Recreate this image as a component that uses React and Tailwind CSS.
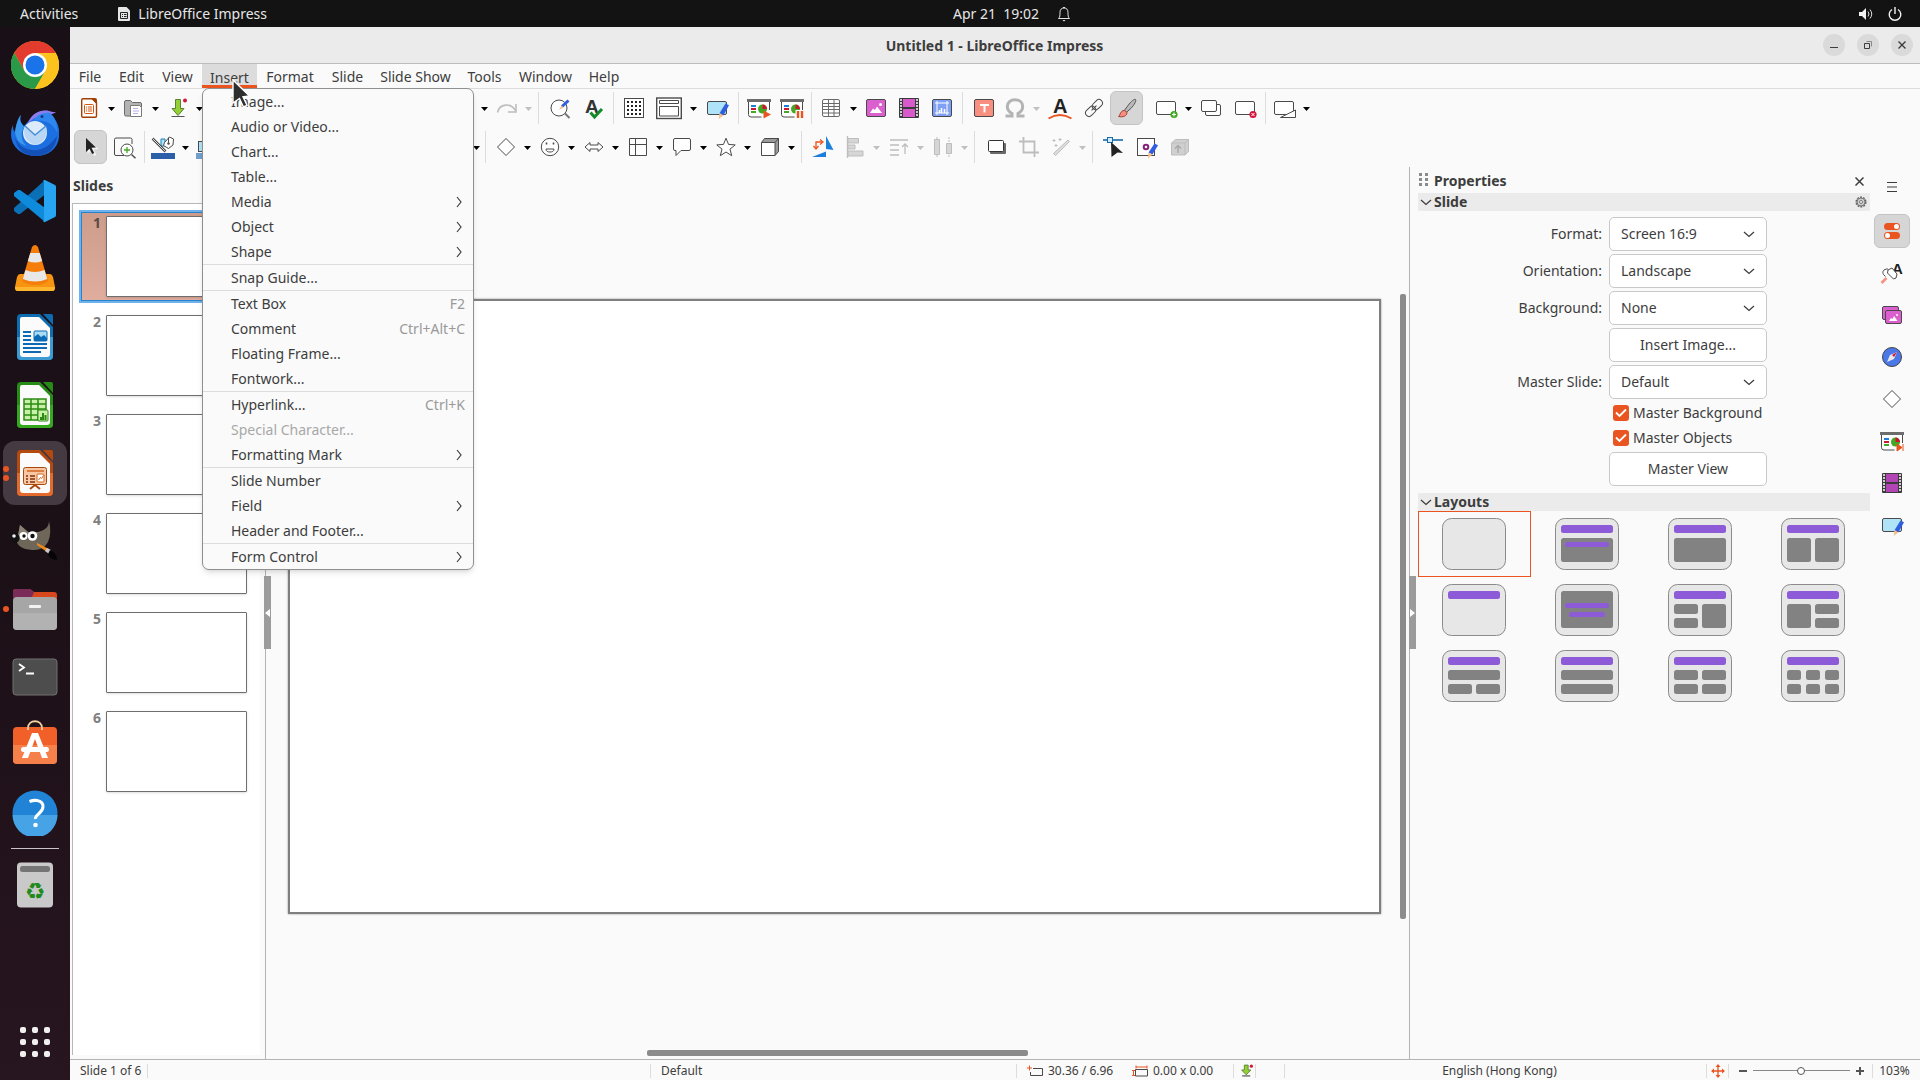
import React from 'react';

const G = '#4a4a4a';
const D = '#bdbdbd';

function S({ children, vb = '0 0 24 24', w = 24, h = 24 }) {
  return (
    <svg width={w} height={h} viewBox={vb} fill="none" className="block shrink-0" aria-hidden="true">
      {children}
    </svg>
  );
}

/* ---------- toolbar icons, all on a 24 unit grid ---------- */

const Board = ({ end }) => (
  <S>
    <path d="M2 5h20v16H4.500Q2 21 2 18.500z" fill="#fff" />
    <path d="M1.500 5v13.500q0 2.500 2.500 2.500h10.500M22.500 5v9" stroke={G} />
    <rect x="0" y="3" width="24" height="3" fill="#6d6d6d" />
    <path d="M4 9h5v2H4z" fill="#1b7fdc" />
    <path d="M4 12h5v2H4z" fill="#c9182f" />
    <path d="M4 15h5v2H4z" fill="#43a823" />
    <circle cx="15.500" cy="13" r="4.500" fill="#43a823" />
    <path d="M15.500 13V8.500A4.500 4.500 0 0 1 20 13z" fill="#c9182f" />
    {end}
  </S>
);

const DrawPen = () => (
  <S>
    <rect x="2.500" y="5.500" width="19" height="13" rx="1.500" fill="#aee3f8" stroke={G} />
    <path d="M20.500 7.500l3.500 1.800-5.500 10-4-2z" fill="#2f5fe0" />
    <path d="M14.500 17.300l4 2-4.800 3.700z" fill="#f7c08a" />
  </S>
);

const Diamond = () => (
  <S>
    <path d="M12 3.500l8.500 8.500-8.500 8.500L3.500 12z" stroke={G} fill="#fff" />
  </S>
);

const Film = ({ c = '#d95acb' }) => (
  <S>
    <rect x="2" y="2" width="20" height="20" rx="1" fill="#3b3b3b" />
    <path d="M6 3h12v8H6zM6 13h12v8H6z" fill={c} />
    <path d="M3 4h2M3 7h2M3 10h2M3 13h2M3 16h2M3 19h2M19 4h2M19 7h2M19 10h2M19 13h2M19 16h2M19 19h2" stroke="#fff" strokeWidth="1.500" />
  </S>
);

const icons = {
  newDoc: (
    <S>
      <path d="M4.700 4q0-1.300 1.300-1.300h9.500l4 4V20q0 1.300-1.300 1.300H6q-1.300 0-1.300-1.300z" fill="#fff" stroke="#a33e03" strokeWidth="1.400" />
      <path d="M13.500 2H18q2 0 2 2v4.500z" fill="#a33e03" />
      <rect x="7.500" y="8.500" width="9" height="9" rx="1" stroke="#d3560f" />
      <path d="M9 11h1.200M9 13h1.200M9 15h1.200M11 11h4M11 13h4M11 15h4" stroke="#d3560f" />
    </S>
  ),
  open: (
    <S>
      <path d="M3.500 6q0-1.500 1.500-1.500h4.500l2 2H19q1.500 0 1.500 1.500v10.500q0 1.500-1.500 1.500H5q-1.500 0-1.500-1.500z" fill="#b3b3b3" stroke="#6b6b6b" />
      <path d="M9.500 9.500h9l2 2v9h-11z" fill="#fff" stroke="#7a7a7a" />
      <path d="M12 12.500h5M12 15h6M12 17.500h5" stroke="#b7aef0" />
    </S>
  ),
  save: (
    <S>
      <path d="M9.500 3.500h5v9h3.500L12 19.500 6 12.500h3.500z" fill="#93d036" stroke="#5f7f35" />
      <path d="M5.500 20.500h13" stroke="#555" />
      <circle cx="19" cy="4.500" r="2" fill="#d3163c" />
    </S>
  ),
  redo: (
    <S>
      <path d="M2.500 16.500c2-9 13-10 18-2" stroke={D} strokeWidth="1.600" />
      <path d="M21 8v8h-8" stroke={D} strokeWidth="1.600" />
    </S>
  ),
  find: (
    <S>
      <circle cx="11" cy="12" r="8" fill="#fff" stroke={G} />
      <path d="M17 17.500l4.500 4.500" stroke="#777" strokeWidth="2" />
      <path d="M20.500 4.500L14 10.500" stroke="#2f5fe0" strokeWidth="3" />
      <path d="M13.500 9.500l2 2-4.500 2.500z" fill="#f7c08a" />
    </S>
  ),
  spell: (
    <S>
      <text x="4" y="17" fontSize="19" fontWeight="700" fill="#333" fontFamily="Liberation Sans, sans-serif">A</text>
      <path d="M9.500 16.500l4 4.500 7.500-8" stroke="#148a2a" strokeWidth="3" />
    </S>
  ),
  grid: (
    <S>
      <rect x="2.500" y="2.500" width="19" height="19" fill="#fff" stroke={G} />
      <path d="M5 6h14M5 10h14M5 14h14M5 18h14" stroke="#222" strokeWidth="2" strokeDasharray="2 2" />
    </S>
  ),
  views: (
    <S w={26} vb="0 0 26 24">
      <rect x="0.700" y="2" width="24.600" height="20.500" fill="#fff" stroke={G} strokeWidth="1.400" />
      <path d="M3.500 4.500h19v3h-19zM3.500 10.500h19v9.500h-19z" stroke={G} />
    </S>
  ),
  draw: <DrawPen />,
  start: <Board end={<path d="M16.500 14.500v8l7.500-4z" fill="#e95420" />} />,
  startPause: <Board end={<><path d="M15.500 14H24v8h-8.500z" fill="#fafafa" /><path d="M18 15v7M22 15v7" stroke="#e95420" strokeWidth="2.400" /></>} />,
  table: (
    <S>
      <rect x="3.500" y="3.500" width="17" height="17" rx="1.500" fill="#fff" stroke="#6a6a6a" />
      <path d="M3.500 7.500h17M3.500 10.500h17M3.500 13.500h17M3.500 17h17M9.500 3.500v17M15 3.500v17" stroke="#6a6a6a" />
    </S>
  ),
  image: (
    <S>
      <rect x="2.500" y="3.500" width="19" height="17" rx="1.500" fill="#db5fcf" stroke={G} />
      <path d="M6 17l3-4.500 2 1.500 2-3.500 5 6.500z" fill="#fff" />
      <circle cx="16.500" cy="8.500" r="1.500" fill="#fff" />
    </S>
  ),
  movie: <Film />,
  chart: (
    <S>
      <rect x="2.500" y="3.500" width="19" height="17" rx="1.500" fill="#7fa0f5" stroke={G} />
      <path d="M7 5v14M5 17h14M17 5v14M5 7h14" stroke="#fff" />
      <path d="M9.500 17v-3M11.500 17v-5M14.500 17v-4" stroke="#fff" strokeWidth="1.500" />
    </S>
  ),
  textbox: (
    <S>
      <rect x="2.500" y="3.500" width="19" height="17" rx="1.500" fill="#f98f80" stroke={G} />
      <path d="M8 9h9M12.500 9v7.500" stroke="#fff" strokeWidth="2" />
    </S>
  ),
  omega: (
    <S>
      <path d="M2.500 20h6.500v-2.500C6 16 4.300 13.500 4.300 10.500 4.300 6.500 7.500 3.800 12 3.800s7.700 2.700 7.700 6.700c0 3-1.700 5.500-4.700 7V20h6.500" stroke="#b3b3b3" strokeWidth="3" />
    </S>
  ),
  fontwork: (
    <S>
      <text x="5" y="16.500" fontSize="20" fontWeight="700" fill="#222" fontFamily="Liberation Sans, sans-serif">A</text>
      <path d="M0.500 22.500Q12 15.500 23.500 22.500" stroke="#e95420" strokeWidth="2" />
    </S>
  ),
  link: (
    <S>
      <g transform="rotate(-45 12 12)" stroke={G}>
        <rect x="1.500" y="8.500" width="11.500" height="7" rx="3.500" />
        <rect x="11" y="8.500" width="11.500" height="7" rx="3.500" />
        <path d="M8.500 12h7" />
      </g>
    </S>
  ),
  brush: (
    <S>
      <path d="M20.500 3.500c1.200 1-1 5-4.500 8.800l-4.500 4-2-2 3.500-4.800c3-4 6.500-7 7.500-6z" fill="#b9b9b9" stroke="#555" />
      <path d="M9.500 14.300l2.500 2.500c0 3-4 4.700-8.500 3.700 2-1.200 1.500-5.700 6-6.200z" fill="#f98f80" stroke="#a33e2c" />
    </S>
  ),
  newSlide: (
    <S>
      <rect x="2.500" y="5.500" width="19" height="13" rx="1.500" fill="#fff" stroke={G} />
      <circle cx="20" cy="18.500" r="3.600" fill="#43a823" />
      <path d="M18 18.500h4M20 16.500v4" stroke="#fff" />
    </S>
  ),
  dupSlide: (
    <S>
      <rect x="6.500" y="8.500" width="15" height="11" rx="1.500" fill="#fff" stroke={G} />
      <rect x="2.500" y="4.500" width="15" height="11" rx="1.500" fill="#fff" stroke={G} />
    </S>
  ),
  delSlide: (
    <S>
      <rect x="2.500" y="5.500" width="19" height="13" rx="1.500" fill="#fff" stroke={G} />
      <circle cx="20" cy="18.500" r="3.600" fill="#d3163c" />
      <path d="M18.500 17l3 3M21.500 17l-3 3" stroke="#fff" />
    </S>
  ),
  layout: (
    <S>
      <rect x="1.500" y="5.500" width="19" height="13" rx="1.500" fill="#fff" stroke={G} />
      <path d="M7.500 21.500L22.500 14v7.500z" fill="#fff" stroke={G} />
    </S>
  ),
  select: (
    <S>
      <path d="M7 3l11 10-4.800.5 2.800 5.500-2.500 1-2.500-5.500L7 18z" fill="#fff" opacity=".7" transform="translate(1.500 1)" />
      <path d="M7 3l10 9.500-4.500.3 2.700 5.300-2 1-2.700-5.400L7 17z" fill="#222" />
    </S>
  ),
  zoom: (
    <S>
      <path d="M12 20.500H4q-1.500 0-1.500-1.500V4.500Q2.500 3 4 3h14.500Q20 3 20 4.500V9" stroke={G} />
      <circle cx="15" cy="15" r="6" fill="#fff" stroke={G} />
      <path d="M15 12v6M12 15h6" stroke="#43a823" strokeWidth="1.300" />
      <path d="M19.500 19.500l4 3.800" stroke={G} strokeWidth="1.400" />
    </S>
  ),
  fill: (
    <S>
      <path d="M10 4h4v7h-4z" fill="#aee3f8" stroke="#1b7fb5" />
      <path d="M13.500 7.500l5-5.500 4 2-.5 6-4.500 3.500-5-3z" fill="#fff" stroke={G} />
      <path d="M17.500 2.500v5" stroke={G} />
      <circle cx="17.500" cy="8.500" r="1.200" fill={G} />
      <path d="M1.500 3.500l13 13" stroke={G} strokeWidth="2.500" />
      <path d="M1.500 3.500l13 13" stroke="#ddd" />
      <rect x="0" y="18" width="24" height="6" fill="#2b5fa8" />
    </S>
  ),
  line: (
    <S>
      <rect x="2.500" y="6.500" width="14" height="10" fill="#aee3f8" stroke={G} />
      <rect x="0" y="18" width="24" height="6" fill="#729fcf" />
    </S>
  ),
  diamond: <Diamond />,
  smiley: (
    <S>
      <circle cx="12" cy="12" r="8.700" fill="#fff" stroke={G} />
      <path d="M8.500 7.500v2M15.500 7.500v2" stroke={G} strokeWidth="1.600" />
      <path d="M8 14h8c0 2.500-2 3-4 3s-4-.5-4-3z" stroke={G} />
    </S>
  ),
  arrows: (
    <S>
      <path d="M3 12l5-4.500V10h8V7.500l5 4.500-5 4.500V14H8v2.500z" fill="#fff" stroke={G} />
    </S>
  ),
  flow: (
    <S>
      <path d="M3.500 3.500h17v17h-17z" fill="#fff" stroke={G} />
      <path d="M9.500 3.500v17M3.500 9.500h17" stroke={G} />
    </S>
  ),
  callout: (
    <S>
      <path d="M5 3.500h14q1.500 0 1.500 1.500v9q0 1.500-1.500 1.500h-8L6 20.500v-5H5q-1.500 0-1.500-1.500V5q0-1.500 1.500-1.500z" fill="#fff" stroke={G} />
    </S>
  ),
  star: (
    <S>
      <path d="M12 3.200l2.500 6.200 6.700.5-5.200 4.200 1.700 6.600L12 17l-5.700 3.700L8 14.100 2.800 9.900l6.700-.5z" fill="#fff" stroke={G} />
    </S>
  ),
  cube: (
    <S>
      <path d="M3.500 7.500l3-4h14v13l-3.500 4z" fill="#9a9a9a" stroke={G} />
      <path d="M3.500 7.500h13.500v13H3.500z" fill="#fff" stroke={G} />
      <path d="M17 7.500l3.500-4" stroke={G} />
    </S>
  ),
  rotate: (
    <S>
      <path d="M15 1v13l7.500 1z" fill="#1b7fdc" />
      <path d="M1 22l14-5.500V22z" fill="#1b7fdc" />
      <path d="M5 13V7h6" stroke="#e95420" strokeWidth="1.300" />
      <path d="M9 4.500L12 7 9 9.500M2.500 11L5 14l2.500-3" stroke="#e95420" strokeWidth="1.300" />
    </S>
  ),
  align: (
    <S>
      <path d="M4.500 1v22" stroke={D} strokeWidth="1.300" />
      <path d="M5 3.500h10.500v4.500H5zM5 10h7v4H5zM5 16h15v5H5z" fill="#d6d6d6" stroke={D} />
    </S>
  ),
  arrange: (
    <S>
      <path d="M3 5h18M3 10h9M3 15h9M3 20h9" stroke={D} strokeWidth="1.500" />
      <path d="M18 19v-9M15 12l3-3 3 3" stroke={D} strokeWidth="1.300" />
    </S>
  ),
  distribute: (
    <S>
      <path d="M6 2v20M18 2v20" stroke={D} strokeDasharray="2 1" />
      <path d="M3.500 4.500h5v15h-5zM15.500 8.500h5v10h-5z" fill="#d6d6d6" stroke={D} />
    </S>
  ),
  shadow: (
    <S>
      <rect x="6" y="8" width="16" height="11" rx="1" fill="#6a6a6a" />
      <rect x="4.500" y="5.500" width="15" height="11" rx="1" fill="#fff" stroke="#333" />
    </S>
  ),
  crop: (
    <S>
      <path d="M6.500 2v15.500H22M2 6.500h15.500V22" stroke={D} strokeWidth="1.800" />
    </S>
  ),
  wand: (
    <S>
      <path d="M4.500 18.500L19 5l1.500 1.500L6.500 20.500z" fill="#ddd" stroke={D} />
      <path d="M5 4v3M3.500 5.500h3M11 3v3M9.500 4.500h3M7 9v3M5.500 10.500h3" stroke={D} />
    </S>
  ),
  points: (
    <S>
      <path d="M2 5h20" stroke="#1b6aa8" strokeWidth="1.600" />
      <rect x="6.500" y="2.500" width="5" height="5" fill="#cdeefc" stroke="#1b6aa8" />
      <path d="M10 7l12 11-5.500-.5L10.500 22z" fill="#222" />
    </S>
  ),
  glue: (
    <S>
      <rect x="3.500" y="3.500" width="17" height="17" fill="#fff" stroke={G} />
      <circle cx="12" cy="12" r="2.300" stroke="#87237b" strokeWidth="2" />
      <path d="M20.500 8.500l3.500 1.800-5.500 9.200-4-2z" fill="#2f5fe0" />
      <path d="M14.500 17.500l4 2-4.500 4z" fill="#f7c08a" />
    </S>
  ),
  extrude: (
    <S>
      <path d="M3.500 8l4-3.500h13v12L17 20H3.500z" fill="#d0d0d0" stroke={D} />
      <path d="M3.500 8H17v12M17 8l3.500-3.500" stroke={D} />
      <path d="M10 18v-7M7 13.500l3-3 3 3" stroke="#a9a9a9" strokeWidth="1.500" />
    </S>
  ),
};

/* ---------- toolbars ---------- */

function Toolbar({ items, label }) {
  return (
    <div role="toolbar" aria-label={label} className="flex h-[34px] items-center">
      {items.map((it, i) => {
        const [kind, width, state] = it;
        if (kind === '|') return <span key={i} className={`flex h-8 shrink-0 justify-center ${width || 'w-[7px]'}`}><span className="w-px bg-[#dcdcdc]" /></span>;
        if (kind === ' ') return <span key={i} className={`shrink-0 ${width}`} />;
        if (kind === 'v')
          return (
            <button key={i} aria-label="More options" className={`flex h-[34px] shrink-0 items-center justify-center ${width || 'w-[11px]'}`}>
              <svg width="7" height="4" viewBox="0 0 7 4" className="mt-0.5"><path d="M0 0h7L3.500 4z" fill={state === 'off' ? '#c0c0c0' : '#000'} /></svg>
            </button>
          );
        return (
          <button
            key={i}
            aria-label={kind}
            className={`flex h-[34px] shrink-0 items-center justify-center ${width || 'w-[33px]'} ${state === 'on' ? 'rounded-md border border-[#c4c4c4] bg-[#d6d6d6]' : ''}`}
          >
            {icons[kind]}
          </button>
        );
      })}
    </div>
  );
}

const row1 = [
  ['newDoc', 'w-8'], ['v', 'w-3'], ['open', 'w-8'], ['v', 'w-3'], ['save'], ['v'], [' ', 'w-[274px]'],
  ['v'], ['redo'], ['v', '', 'off'], ['|', 'w-[9px]'], ['find'], ['spell', 'w-[34px]'], ['|'],
  ['grid'], ['views', 'w-[37px]'], ['v', 'w-3'], ['draw', 'w-9'], ['|'], ['start'], ['startPause'], ['|', 'w-1.5'],
  ['table'], ['v', 'w-3'], ['image'], ['movie'], ['chart'], ['|', 'w-[9px]'],
  ['textbox'], ['omega', 'w-[30px]'], ['v', 'w-3', 'off'], ['fontwork', 'w-[35px]'], ['link'], ['brush', '', 'on'], [' ', 'w-1.5'],
  ['newSlide'], ['v', 'w-3'], ['dupSlide', 'w-[34px]'], ['delSlide', 'w-[34px]'], ['|', 'w-1.5'], ['layout'], ['v'],
];

const row2 = [
  [' ', 'w-px'], ['select', '', 'on'], ['zoom', 'w-[34px]'], ['|', 'w-1.5'], ['fill', 'w-8'], ['v', 'w-3'], ['line'], [' ', 'w-[247px]'],
  ['v'], ['|', 'w-[7px]'], ['diamond'], ['v'], ['smiley'], ['v'], ['arrows'], ['v'], ['flow'], ['v'],
  ['callout'], ['v'], ['star'], ['v'], ['cube'], ['v'], ['|', 'w-[9px]'],
  ['rotate'], ['align', 'w-8'], ['v', '', 'off'], ['arrange'], ['v', '', 'off'], ['distribute'], ['v', '', 'off'], ['|', 'w-[9px]'],
  ['shadow'], ['crop'], ['wand', 'w-8'], ['v', '', 'off'], ['|', 'w-2'], ['points'], ['glue', 'w-[34px]'], ['extrude'],
];

/* ---------- menus ---------- */

const insertMenu = [
  ['Image...'], ['Audio or Video...'], ['Chart...'], ['Table...'],
  ['Media', '>'], ['Object', '>'], ['Shape', '>'], null,
  ['Snap Guide...'], null,
  ['Text Box', 'F2'], ['Comment', 'Ctrl+Alt+C'], ['Floating Frame...'], ['Fontwork...'], null,
  ['Hyperlink...', 'Ctrl+K'], ['Special Character...', 'off'], ['Formatting Mark', '>'], null,
  ['Slide Number'], ['Field', '>'], ['Header and Footer...'], null,
  ['Form Control', '>'],
];

function InsertMenu() {
  return (
    <div role="menu" aria-label="Insert" className="absolute top-full left-0 z-20 w-[272px] rounded-[7px] border border-[#8f8f8f] bg-[#fafafa] shadow-md">
      {insertMenu.map((m, i) =>
        m === null ? (
          <div key={i} role="separator" className="h-px bg-[#dcdcdc]" />
        ) : (
          <button key={i} role="menuitem" disabled={m[1] === 'off'} className="flex h-[25px] w-full items-center justify-between pr-2 pl-7 text-left text-[#3d3d3d] disabled:text-[#a8a8a8]">
            <span>{m[0]}</span>
            {m[1] === '>' ? (
              <svg width="8" height="12" viewBox="0 0 8 12" fill="none" className="mr-0.5"><path d="M2 1l4 5-4 5" stroke="#3d3d3d" strokeWidth="1.200" /></svg>
            ) : m[1] && m[1] !== 'off' ? (
              <span className="text-[#999]">{m[1]}</span>
            ) : null}
          </button>
        ),
      )}
      <svg width="20" height="32" viewBox="0 0 20 32" className="absolute -top-2.5 left-[29px]">
        <path d="M1 1l16.500 16-6.500.8 4 8.500-3.500 1.700-4-8.500L1 24z" fill="#2e2e2e" stroke="#fff" strokeWidth="1.400" />
      </svg>
    </div>
  );
}

const menus = [
  ['File', 'w-10'], ['Edit', 'w-[43px]'], ['View', 'w-[49px]'], ['Insert', 'w-[55px]'], ['Format', 'w-[66px]'],
  ['Slide', 'w-[49px]'], ['Slide Show', 'w-[87px]'], ['Tools', 'w-[51px]'], ['Window', 'w-[71px]'], ['Help', 'w-[46px]'],
];

/* ---------- dock ---------- */

function DocIcon({ a, b, children }) {
  return (
    <S w={38} h={46} vb="0 0 38 46">
      <path d="M5 0h19l13 13v29q0 4-4 4H5q-4 0-4-4V4q0-4 4-4z" fill={a} />
      <path d="M1 23h36v19q0 4-4 4H5q-4 0-4-4z" fill={b} />
      <path d="M6 3h17l11 11v26q0 3-3 3H7q-3 0-3-3V5q0-2 2-2z" fill="#fbfbfb" />
      <path d="M27 0h8q2 0 2 2v9z" fill={a} />
      {children}
    </S>
  );
}

const dock = [
  ['Google Chrome', (
    <S w={48} h={48} vb="0 0 48 48">
      <circle cx="24" cy="24" r="24" fill="#fcc31e" />
      <path d="M3.200 12A24 24 0 0 1 44.800 12H24L13.600 30z" fill="#e33b2e" />
      <path d="M3.200 12A24 24 0 0 0 24 48L34.400 30 24 24 13.600 30z" fill="#2a9a49" />
      <path d="M24 48A24 24 0 0 0 44.800 12H24l10.400 18z" fill="#fcc31e" />
      <circle cx="24" cy="24" r="12" fill="#fff" />
      <circle cx="24" cy="24" r="9.500" fill="#1a73e8" />
    </S>
  )],
  ['Thunderbird', (
    <S w={48} h={48} vb="0 0 48 48">
      <path d="M10 6c-2 5 0 8 3 11l7-8c4-6 12-8 18-7-2 1 0 3 2 4 7 6 9 14 8 22-1 12-11 19-23 19C11 47 0 38 0 25c0-4 1-7 2-9 0 3 0 5 2 7C5 16 7 9 10 6z" fill="#1c6fe0" />
      <path d="M10 6c-2 5 0 8 3 12-4 6-3 15 3 19-8-2-11-7-12-14C5 16 7 9 10 6z" fill="#3b9af0" />
      <path d="M17 15C19 6 28 0 38 2c3 1 4 1 7 1-3 2-5 3-10 3-8 0-14 4-18 9z" fill="#8e7bf0" />
      <path d="M22 12c4-6 10-9 17-8 5 4 8 11 7 20-3-8-10-14-24-12z" fill="#2f86ee" />
      <path d="M4 28c3 9 12 14 22 13 8-1 14-6 20-14-1 12-9 20-22 20C13 47 5 39 4 28z" fill="#1351b8" />
      <circle cx="24" cy="24" r="12" fill="#dcebfb" />
      <path d="M14 17l10 9 11-9c3 9-2 16-10 19-9-2-14-10-11-19z" fill="#b9d6f5" />
      <path d="M14 17l10 9 11-9" stroke="#4a90d9" strokeWidth="1.500" />
      <circle cx="31" cy="7.500" r="1.500" fill="#123a80" />
    </S>
  )],
  ['Visual Studio Code', (
    <S w={44} h={44} vb="0 0 44 44">
      <path d="M32 1L1 29v3l4 3h2L34 14z" fill="#0a6fb5" />
      <path d="M7 11H5l-4 3v3l31 26 3-12z" fill="#0e8bdb" />
      <path d="M32 1l10 5q1 .5 1 2v28q0 1.500-1 2l-10 5q-1 .5-2-1 1 0 1-2V4q0-2-1-2 1-1.500 2-1z" fill="#27a5f3" />
    </S>
  )],
  ['VLC', (
    <S w={42} h={48} vb="0 0 42 48">
      <path d="M6 29h30q2 0 3 3l2 10q0 3-2 3H3q-2 0-2-3l2-10q1-3 3-3z" fill="#f79412" />
      <path d="M1 42h40q0 4-2 4H3q-2 0-2-4z" fill="#ffb52e" />
      <path d="M18 2q3-4 6 0l10 34q-5 4-13 4T8 36z" fill="#f47d0b" />
      <path d="M16.300 8h9.400l2.500 8q-7 3-14.400 0zM11.500 25q9 4 19 0l2.700 9q-12 5-24.400 0z" fill="#e8e8e8" />
    </S>
  )],
  ['LibreOffice Writer', (
    <DocIcon a="#0e6cb0" b="#3d9bd4">
      <path d="M7 18h8M7 22h8M7 26h8M7 30h24M7 34h24M7 38h18" stroke="#0b6cb5" strokeWidth="2" />
      <rect x="18" y="17" width="13" height="10" rx="1" fill="#a9dcf5" stroke="#0b6cb5" />
      <path d="M18 27v-4l4-3 3 3 3-2 3 3v3z" fill="#0b6cb5" />
    </DocIcon>
  )],
  ['LibreOffice Calc', (
    <DocIcon a="#268c16" b="#35a820">
      <path d="M8 17h22v21H8z" fill="#c9f0a8" stroke="#2c8a12" strokeWidth="1.500" />
      <path d="M8 22h22M8 27h22M8 33h22M15 17v21M22 17v21" stroke="#2c8a12" strokeWidth="1.500" />
      <rect x="22" y="28" width="10" height="11" rx="1" fill="#c9f0a8" stroke="#2c8a12" />
      <path d="M25 38v-3M27 38v-7M29.500 38v-5" stroke="#2c8a12" strokeWidth="2" />
    </DocIcon>
  )],
  ['LibreOffice Impress', (
    <DocIcon a="#b54a10" b="#e36a2c">
      <path d="M14 39l5-4 5 4" stroke="#a8480f" strokeWidth="2" />
      <rect x="7.500" y="17.500" width="23" height="17" rx="2" fill="#f8c8a4" stroke="#a8480f" />
      <path d="M11 21h17" stroke="#d3661f" strokeWidth="1.500" />
      <path d="M10 26h2M10 29h2M10 32h2M14 26h5M14 29h5M14 32h5" stroke="#7d3207" strokeWidth="1.500" />
      <rect x="21" y="24" width="7" height="8" rx="1" fill="#fff" stroke="#d3661f" />
      <path d="M22.500 30l2-2.500 1 1 2-3" stroke="#d3661f" />
    </DocIcon>
  ), 2],
  ['GIMP', (
    <S w={48} h={40} vb="0 0 48 40">
      <path d="M9 4l8 7q10 2 17-3 4-3 4-8 3 12-1 21-5 9-16 8Q6 28 5 18 8 12 9 4z" fill="#6d6659" />
      <path d="M9 4l8 7q8 2 14-1-12 8-24 5z" fill="#8a8272" />
      <circle cx="12.500" cy="15" r="4" fill="#fff" /><circle cx="13" cy="15" r="1.700" fill="#111" />
      <circle cx="21.500" cy="15" r="4.800" fill="#fff" /><circle cx="21.500" cy="15" r="2.200" fill="#111" />
      <ellipse cx="4" cy="17" rx="4.500" ry="5" fill="#111" /><circle cx="3" cy="15" r="1.800" fill="#eee" />
      <path d="M26 22l12 6-2 3-10-7z" fill="#f08a1d" />
      <path d="M36 27l4 2-2 4-4-3z" fill="#c9c9c9" />
      <path d="M39 29q7 3 7 10-8-1-9-6z" fill="#050505" />
    </S>
  )],
  ['Files', (
    <S w={46} h={42} vb="0 0 46 42">
      <path d="M1 4q0-3 3-3h14l4 3h20q3 0 3 3v12H1z" fill="#d9481c" />
      <path d="M1 4q0-3 3-3h14l4 3-6 15H1z" fill="#7b2b58" />
      <rect x="1" y="9" width="44" height="33" rx="4" fill="#a6a6a6" />
      <path d="M1 25h44v13q0 4-4 4H5q-4 0-4-4z" fill="#b2b2b2" />
      <rect x="17" y="17" width="12" height="3" rx="1" fill="#f2f2f2" />
    </S>
  ), 1],
  ['Terminal', (
    <S w={46} h={38} vb="0 0 46 38">
      <rect x="1" y="1" width="44" height="36" rx="3" fill="#4d4d4d" stroke="#707070" />
      <path d="M7 6l5 3.500L7 13M14 15.500h8" stroke="#fff" strokeWidth="1.800" />
    </S>
  )],
  ['Ubuntu Software', (
    <S w={46} h={50} vb="0 0 46 50">
      <rect x="1" y="7" width="44" height="37" rx="4" fill="#f2602a" />
      <path d="M1 25h44v15q0 4-4 4H5q-4 0-4-4z" fill="#f58049" />
      <path d="M16 10V8c0-9 14-9 14 0v2" stroke="#f5cf9e" strokeWidth="1.800" />
      <path d="M20 13h6l10 25h-6l-7-19-7 19h-6z" fill="#fff" />
      <rect x="9" y="27" width="28" height="5" rx="2.500" fill="#fff" />
    </S>
  )],
  ['Help', (
    <S w={46} h={46} vb="0 0 46 46">
      <circle cx="23" cy="23" r="22.500" fill="#2183d6" />
      <path d="M.5 25a22.500 22.500 0 0 0 45 0z" fill="#45a3e6" />
      <path d="M17.500 11.500q4-1.500 7.500-1 6 1 6 6 0 3.500-4 7t-3.500 5.500" stroke="#fff" strokeWidth="3" />
      <circle cx="23.500" cy="35" r="2.300" fill="#fff" />
    </S>
  )],
];

/* ---------- layouts panel ---------- */

const P = '#8e5bd8';
const K = '#828282';
const title = [6, 7, 52, 8, P];
const layouts = [
  [],
  [title, [6, 20, 52, 24, K], [10, 24, 44, 5, P]],
  [title, [6, 20, 52, 24, K]],
  [title, [6, 20, 24, 24, K], [34, 20, 24, 24, K]],
  [title],
  [[6, 7, 52, 37, K], [10, 19, 44, 5, P], [14, 28, 36, 5, P]],
  [title, [6, 20, 24, 10, K], [6, 34, 24, 10, K], [34, 20, 24, 24, K]],
  [title, [6, 20, 24, 24, K], [34, 20, 24, 10, K], [34, 34, 24, 10, K]],
  [title, [6, 20, 52, 10, K], [6, 34, 24, 10, K], [34, 34, 24, 10, K]],
  [title, [6, 20, 52, 10, K], [6, 34, 52, 10, K]],
  [title, [6, 20, 24, 10, K], [34, 20, 24, 10, K], [6, 34, 24, 10, K], [34, 34, 24, 10, K]],
  [title, [6, 20, 14, 10, K], [25, 20, 14, 10, K], [44, 20, 14, 10, K], [6, 34, 14, 10, K], [25, 34, 14, 10, K], [44, 34, 14, 10, K]],
];

function Chevron({ className = '' }) {
  return (
    <svg width="12" height="7" viewBox="0 0 12 7" fill="none" className={className} aria-hidden="true">
      <path d="M1 1l5 4.500L11 1" stroke="#3d3d3d" strokeWidth="1.300" />
    </svg>
  );
}

function SectionBar({ children, gear }) {
  return (
    <div className="flex h-[18px] items-center bg-[#ebebeb] pr-[3px] pl-0.5">
      <button className="flex grow items-center gap-0.5 text-left font-bold"><Chevron />{children}</button>
      {gear && (
        <button aria-label="More options">
          <svg width="12" height="12" viewBox="0 0 12 12" fill="none" className="block"><circle cx="6" cy="6" r="4.800" stroke="#666" strokeWidth="1.500" strokeDasharray="2 1" /><circle cx="6" cy="6" r="4" fill="#ccc" stroke="#777" /><circle cx="6" cy="6" r="1.500" fill="#fff" stroke="#777" /></svg>
        </button>
      )}
    </div>
  );
}

function Field({ id, label, value }) {
  return (
    <div className="flex items-center">
      <label htmlFor={id} className="w-[184px] text-right">{label}</label>
      <div className="relative ml-[7px] w-[158px]">
        <select id={id} defaultValue={value} className="h-[34px] w-full appearance-none rounded-[5px] border border-[#c9c9c9] bg-white pl-[11px]">
          <option>{value}</option>
        </select>
        <Chevron className="pointer-events-none absolute top-3.5 right-3" />
      </div>
    </div>
  );
}

function Check({ label }) {
  return (
    <label className="ml-[195px] flex h-[25px] items-center gap-1 whitespace-nowrap">
      <span className="relative flex h-4 w-4">
        <input type="checkbox" defaultChecked className="h-4 w-4 appearance-none rounded-[3px] bg-[#e95420]" />
        <svg width="12" height="10" viewBox="0 0 12 10" fill="none" className="pointer-events-none absolute top-[3px] left-0.5"><path d="M1 4.500L4.500 8 11 1.500" stroke="#fff" strokeWidth="1.800" /></svg>
      </span>
      {label}
    </label>
  );
}

const tabs = [
  ['Properties', (
    <S>
      <rect x="4" y="4" width="16" height="7" rx="3.500" fill="#e95420" /><circle cx="16.500" cy="7.500" r="2.500" fill="#fff" />
      <rect x="4" y="13" width="16" height="7" rx="3.500" fill="#e95420" /><circle cx="7.500" cy="16.500" r="2.500" fill="#fff" />
    </S>
  )],
  ['Styles', (
    <S>
      <text x="12" y="13" fontSize="15" fontWeight="700" fill="#222" fontFamily="Liberation Sans, sans-serif">A</text>
      <path d="M8 9l4-2 5 6-1 4-2.500 1-6-6z" fill="#fff" stroke={G} />
      <path d="M8 8c-5 0-6 3-4.500 5.500l2 2" stroke={G} />
      <path d="M1.500 22l5-5" stroke="#f98f80" strokeWidth="2.500" />
    </S>
  )],
  ['Gallery', (
    <S>
      <rect x="2.500" y="3.500" width="16" height="13" rx="1.500" fill="#db5fcf" stroke={G} />
      <rect x="5.500" y="7.500" width="16" height="13" rx="1.500" fill="#db5fcf" stroke={G} />
      <path d="M9 18l2-3 1.500 1 1.500-3 3.500 5z" fill="#fff" /><circle cx="17" cy="12" r="1" fill="#fff" />
    </S>
  )],
  ['Navigator', (
    <S>
      <circle cx="12" cy="12" r="9.500" fill="#4a78e8" stroke="#444" />
      <path d="M17 7l-3 7-7 3 3-7z" fill="#e8e8e8" /><path d="M17 7l-3 5-2-2z" fill="#d3163c" />
    </S>
  )],
  ['Shapes', <Diamond />],
  ['Slide Transition', <Board end={<path d="M17 15v7l5-3.500zM23 15v7" fill="#e95420" stroke="#e95420" />} />],
  ['Animation', <Film c="#b344b3" />],
  ['Master Slides', <DrawPen />],
];

/* ---------- page ---------- */

function Bar({ className = '' }) {
  return <span className={`h-3.5 w-px shrink-0 bg-[#dcdcdc] ${className}`} />;
}

export default function App() {
  return (
    <div className="flex h-screen flex-col overflow-hidden bg-[#fafafa] font-['Noto_Sans',sans-serif] text-sm leading-5 text-[#3d3d3d]">
      <header className="grid h-[27px] shrink-0 grid-cols-3 items-center bg-[#131313] text-[#e6e6e6]">
        <div className="flex items-center pl-5">
          <button>Activities</button>
          <button className="ml-10 flex items-center gap-2">
            <svg width="12" height="14" viewBox="0 0 12 14"><path d="M1 0h7.500L12 3.500V13q0 1-1 1H1q-1 0-1-1V1q0-1 1-1z" fill="#e6e6e6" /><path d="M2.500 5.500h7v6h-7z" fill="none" stroke="#222" /><path d="M4 7.500h1M4 9.500h1M6 7.500h2.500M6 9.500h2.500" stroke="#222" /></svg>
            LibreOffice Impress
          </button>
        </div>
        <div className="flex items-center justify-center gap-[18px] pl-[104px]">
          <button className="whitespace-pre">Apr 21  19:02</button>
          <svg width="14" height="16" viewBox="0 0 14 16" fill="none"><path d="M1.500 12.500h11c-1.500-1.500-1.500-3-1.500-6C11 3.500 9.500 2 7 2S3 3.500 3 6.500c0 3 0 4.500-1.500 6z" stroke="#e6e6e6" /><path d="M5.500 14h3L7 15.500zM6 1h2v1H6z" fill="#e6e6e6" /></svg>
        </div>
        <div className="flex items-center justify-end gap-3.5 pr-[18px]">
          <svg width="15" height="14" viewBox="0 0 15 14" fill="none"><path d="M0 5h3l4-4v12L3 9H0z" fill="#f2f2f2" /><path d="M9 4.500q2 2.500 0 5M11 2.500q3.500 4.500 0 9" stroke="#ddd" /></svg>
          <svg width="14" height="14" viewBox="0 0 14 14" fill="none"><path d="M4 2.500a5.800 5.800 0 1 0 6 0M7 0v7" stroke="#f2f2f2" strokeWidth="1.400" /></svg>
        </div>
      </header>

      <div className="flex min-h-0 grow">
        <nav aria-label="Dock" className="flex w-[70px] shrink-0 flex-col items-center gap-1 bg-linear-to-b from-[#191017] via-[#1c1017] to-[#27151f] pt-1.5">
          {dock.map(([name, icon, dots], i) => (
            <button key={i} aria-label={name} className={`relative flex h-16 w-16 shrink-0 items-center justify-center rounded-xl ${dots === 2 ? 'bg-[#453a41]' : ''}`}>
              {dots && (
                <span className="absolute inset-y-0 left-0 flex flex-col justify-center gap-[3px]">
                  {Array.from({ length: dots }, (_, k) => <span key={k} className="h-1.5 w-1.5 rounded-full bg-[#e95420]" />)}
                </span>
              )}
              {icon}
            </button>
          ))}
          <span className="-mt-px h-px w-12 shrink-0 bg-[#c9c4c7]" />
          <button aria-label="Trash" className="flex h-16 w-16 shrink-0 items-center justify-center">
            <S w={38} h={46} vb="0 0 38 46">
              <rect x="1" y="0.500" width="36" height="45" rx="4" fill="#c9c9c9" />
              <rect x="4" y="4" width="30" height="6" rx="2.500" fill="#757575" />
              <text x="19" y="37" textAnchor="middle" fontSize="23" fill="#22891c" fontFamily="DejaVu Sans, sans-serif">♻</text>
            </S>
          </button>
          <button aria-label="Show Applications" className="mt-auto mb-[23px] grid grid-cols-3 gap-1.5">
            {Array.from({ length: 9 }, (_, k) => <span key={k} className="h-1.5 w-1.5 rounded-[2px] bg-[#f0f0f0]" />)}
          </button>
        </nav>

        <div className="flex min-w-0 grow flex-col">
          <div className="flex h-[37px] shrink-0 items-center border-b border-[#bdbdbd] bg-[#ebebeb] pr-[7px]">
            <h1 className="grow pt-0.5 pl-[96px] text-center font-bold">Untitled 1 - LibreOffice Impress</h1>
            <div className="flex gap-3">
              <button aria-label="Minimize" className="flex h-[22px] w-[22px] items-center justify-center rounded-full bg-[#dadada]"><span className="mt-1 h-px w-2 bg-[#3d3d3d]" /></button>
              <button aria-label="Restore" className="flex h-[22px] w-[22px] items-center justify-center rounded-full bg-[#dadada]">
                <svg width="8" height="8" viewBox="0 0 8 8" fill="none"><path d="M.5 2.500h5v5h-5z" stroke="#3d3d3d" /><path d="M2.500.5h5v5" stroke="#888" /></svg>
              </button>
              <button aria-label="Close" className="flex h-[22px] w-[22px] items-center justify-center rounded-full bg-[#dadada]">
                <svg width="8" height="8" viewBox="0 0 8 8"><path d="M.5.500l7 7M7.500.500l-7 7" stroke="#3d3d3d" strokeWidth="1.400" /></svg>
              </button>
            </div>
          </div>

          <div role="menubar" className="flex h-[25px] shrink-0 border-b border-[#dcdcdc]">
            {menus.map(([m, w]) => (
              <div key={m} className={`relative h-6 ${w}`}>
                <button role="menuitem" className={`h-6 w-full whitespace-nowrap ${m === 'Insert' ? 'border-b-3 border-[#e95420] bg-[#dcdcdc] pt-1' : 'pt-px'}`}>{m}</button>
                {m === 'Insert' && <InsertMenu />}
              </div>
            ))}
          </div>

          <div className="flex shrink-0 flex-col gap-[5px] pt-0.5 pb-[3px] pl-[3px]">
            <Toolbar items={row1} label="Standard" />
            <Toolbar items={row2} label="Drawing" />
          </div>

          <main className="flex min-h-0 grow">
            <section className="flex w-[195px] shrink-0 flex-col pl-0.5 pb-1">
              <h2 className="flex h-9 items-center pt-0.5 pl-px font-bold">Slides</h2>
              <ol className="mr-[5px] flex grow flex-col gap-1.5 border-t border-l border-[#b8b8b8] bg-white pt-1.5 pr-1.5 pl-1.5">
                {[1, 2, 3, 4, 5, 6].map((n) => (
                  <li key={n} className={`flex h-[93px] gap-[5px] border-2 pt-1 pl-px ${n === 1 ? 'border-[#6fb1ea] bg-linear-to-b from-[#cd9c8a] to-[#e0ad9e] outline-1 -outline-offset-3 outline-[#2583cf]' : 'border-transparent'}`}>
                    <span className={`-mt-[3px] w-[19px] text-right font-bold ${n === 1 ? 'text-[#5a4a45]' : 'text-[#808080]'}`}>{n}</span>
                    <button aria-label={`Slide ${n}`} className="h-[81px] w-[141px] shrink-0 rounded-[1px] border border-[#6e6e6e] bg-white shadow-sm" />
                  </li>
                ))}
              </ol>
            </section>
            <div className="relative w-px shrink-0 bg-[#b3b3b3]">
              <button aria-label="Hide slide panel" className="absolute -left-px top-[409px] z-10 flex h-[73px] w-[7px] items-center justify-center bg-[#9b9b9b]"><svg width="5" height="8" viewBox="0 0 5 8"><path d="M5 0v8L0 4z" fill="#fff" /></svg></button>
            </div>

            <section className="flex min-w-0 grow flex-col pb-[3px]">
              <div className="flex grow items-center pr-[3px] pb-1 pl-[22px]">
                <div className="aspect-video grow border-2 border-[#7f7f7f] bg-white shadow-[0_0_2px_#999]" />
                <div className="ml-[19px] h-[71%] w-1.5 rounded-[2px] bg-[#8b8b8b]" />
              </div>
              <div className="mx-auto h-1.5 w-1/3 shrink-0 rounded-[2px] bg-[#8b8b8b]" />
            </section>

            <div className="relative w-px shrink-0 bg-[#b3b3b3]">
              <button aria-label="Hide sidebar" className="absolute left-0 top-[409px] z-10 flex h-[73px] w-[7px] items-center justify-center bg-[#9b9b9b]"><svg width="5" height="8" viewBox="0 0 5 8"><path d="M0 0v8l5-4z" fill="#fff" /></svg></button>
            </div>
            <aside className="flex w-[510px] shrink-0 pl-2">
              <div className="w-[452px]">
                <div className="flex h-[26px] items-center pt-0.5 pr-1.5 pl-px">
                  <svg width="9" height="14" viewBox="0 0 9 14" className="-mt-0.5"><path d="M1.500 0v14M7.500 0v14" stroke="#8b8b8b" strokeWidth="3" strokeDasharray="3 2" /></svg>
                  <h2 className="grow pl-1.5 font-bold">Properties</h2>
                  <button aria-label="Close sidebar deck"><svg width="9" height="9" viewBox="0 0 9 9" className="block"><path d="M.5.500l8 8M8.500.500l-8 8" stroke="#3d3d3d" strokeWidth="1.500" /></svg></button>
                </div>
                <SectionBar gear>Slide</SectionBar>
                <div className="flex flex-col gap-[3px] pt-1.5">
                  <Field id="format" label="Format:" value="Screen 16:9" />
                  <Field id="orientation" label="Orientation:" value="Landscape" />
                  <Field id="background" label="Background:" value="None" />
                  <button className="ml-[191px] h-[34px] w-[158px] rounded-[5px] border border-[#c9c9c9] bg-white">Insert Image...</button>
                  <Field id="master" label="Master Slide:" value="Default" />
                </div>
                <div className="pt-px">
                  <Check label="Master Background" />
                  <Check label="Master Objects" />
                </div>
                <button className="mt-0.5 mb-[7px] ml-[191px] block h-[34px] w-[158px] rounded-[5px] border border-[#c9c9c9] bg-white">Master View</button>
                <SectionBar>Layouts</SectionBar>
                <div className="grid grid-cols-4">
                  {layouts.map((rects, i) => (
                    <button key={i} aria-label={`Layout ${i + 1}`} className={`flex h-[66px] items-center justify-center border pr-0.5 ${i === 0 ? 'border-[#e95420]' : 'border-transparent'}`}>
                      <svg width="64" height="52" viewBox="0 0 64 52" fill="none">
                        <rect x="0.500" y="0.500" width="63" height="51" rx="9" fill="#e7e7e7" stroke="#8b8b8b" />
                        {rects.map(([x, y, w, h, f], k) => <rect key={k} x={x} y={y} width={w} height={h} rx="2.500" fill={f} />)}
                      </svg>
                    </button>
                  ))}
                </div>
              </div>
              <div className="ml-1 flex w-9 flex-col gap-2">
                <button aria-label="Sidebar settings" className="flex h-[39px] shrink-0 items-center justify-center">
                  <svg width="10" height="10" viewBox="0 0 10 10"><path d="M0 .500h10M0 5h10M0 9.500h10" stroke="#3d3d3d" /></svg>
                </button>
                {tabs.map(([name, icon], i) => (
                  <button key={i} aria-label={name} className={`flex h-[34px] shrink-0 items-center justify-center rounded-md ${i === 0 ? 'border border-[#c4c4c4] bg-[#d6d6d6]' : ''}`}>{icon}</button>
                ))}
              </div>
            </aside>
          </main>

          <footer className="flex h-[21px] shrink-0 items-center border-t border-[#b3b3b3] pt-px text-xs leading-4">
            <span className="flex w-[581px] items-center justify-between pl-2.5"><span className="flex items-center gap-1.5">Slide 1 of 6<Bar /></span><Bar /></span>
            <span className="grow pl-2.5">Default</span>
            <Bar />
            <span className="flex w-[115px] items-center gap-[5px] pl-2.5 whitespace-nowrap">
              <svg width="16" height="11" viewBox="0 0 16 11" fill="none"><path d="M0 3h5M2.500.500v5" stroke="#e95420" /><path d="M6 3.500h9.500v7H3.500V7" stroke={G} /></svg>
              30.36 / 6.96
            </span>
            <span className="flex w-[101px] items-center gap-[5px] whitespace-nowrap">
              <svg width="16" height="12" viewBox="0 0 16 12" fill="none"><path d="M4 .500v3M4 2h11M15 .500v3M0 5.500h3M0 10.500h3M1.500 5.500v5" stroke="#e95420" /><path d="M3.500 4.500h12v6.500h-12z" stroke={G} /></svg>
              0.00 x 0.00
            </span>
            <Bar />
            <span className="flex w-[21px] justify-end pr-0.5">
              <svg width="13" height="13" viewBox="0 0 24 24"><path d="M8 2h7v9h5l-8.500 9L3 11h5z" fill="#93d036" stroke="#4f7a2a" strokeWidth="1.500" /><path d="M4 22h15" stroke="#444" strokeWidth="2" /><circle cx="21" cy="4" r="3" fill="#d3163c" /></svg>
            </span>
            <Bar />
            <Bar className="ml-7" />
            <span className="flex w-[421px] justify-center pl-2">English (Hong Kong)</span>
            <Bar />
            <span className="flex w-[21px] justify-center"><svg width="14" height="14" viewBox="0 0 14 14"><path d="M7 0l2.500 3h-5zM7 14l2.500-3h-5zM0 7l3-2.500v5zM14 7l-3-2.500v5z" fill="#e95420" /><path d="M7 2v10M2 7h10" stroke="#e95420" strokeWidth="1.300" /></svg></span>
            <Bar />
            <button aria-label="Zoom out" className="ml-2.5 h-0.5 w-2 bg-[#555]" />
            <input type="range" aria-label="Zoom" min="0" max="100" defaultValue="49" className="mx-1.5 h-px w-[97px] appearance-none bg-[#888] [&::-webkit-slider-thumb]:h-2 [&::-webkit-slider-thumb]:w-2 [&::-webkit-slider-thumb]:appearance-none [&::-webkit-slider-thumb]:rounded-full [&::-webkit-slider-thumb]:border [&::-webkit-slider-thumb]:border-[#555] [&::-webkit-slider-thumb]:bg-white" />
            <button aria-label="Zoom in"><svg width="8" height="8" viewBox="0 0 8 8" className="block"><path d="M0 4h8M4 0v8" stroke="#555" strokeWidth="2" /></svg></button>
            <Bar className="ml-2" />
            <button className="w-[47px] pr-1 text-center">103%</button>
          </footer>
        </div>
      </div>
    </div>
  );
}
